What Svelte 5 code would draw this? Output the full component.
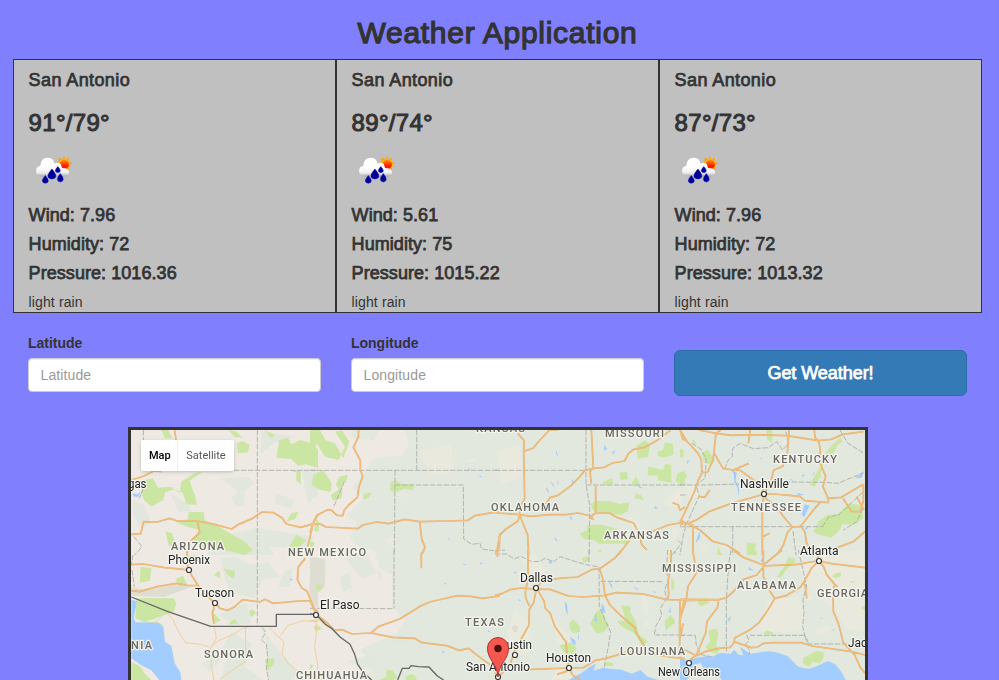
<script>
  const days = [
    { temp: '91°/79°', wind: '7.96', humidity: '72', pressure: '1016.36' },
    { temp: '89°/74°', wind: '5.61', humidity: '75', pressure: '1015.22' },
    { temp: '87°/73°', wind: '7.96', humidity: '72', pressure: '1013.32' }
  ];

  // Each map tile is drawn at three units per pixel from its own origin.
  const tiles = [
    {
      x: 128, y: 425,
      forest: 'M100 15H120L134 40H110Z M326 55L345 48 365 60 360 82 330 85Z M302 15L322 18 344 38 320 36Z M454 45L480 38 490 58 515 45 555 55 570 75V130L535 118 510 122 490 102 445 98Z M410 15L440 30 429 40Z M505 137H518V178L505 168Z M50 165L75 160 90 188 130 185 155 205 160 170 200 145 223 140 185 167 200 210 207 240 175 238 165 205 140 192 112 202 105 225 70 245 48 225 38 205Z M182 260L228 262 229 285 270 303 305 325 350 350 375 376 350 390 300 378 230 370 190 345 215 315 178 305 145 292 180 282Z M112 318L132 325 145 360 123 364Z M490 264L512 260 502 282 475 290Z M505 330L535 345 515 366 480 370Z',
      pale: 'M280 160L360 155 380 176 350 195 348 240 328 247 310 218 330 200Z M445 205L500 225 490 250 440 235Z M400 18L500 35 440 55 398 88Z M520 133H570V210L540 235Z M240 340L390 310 560 335 535 370 420 365 440 390H240Z M15 230L48 238 70 295 40 310 15 270Z M128 205L180 238 190 258 150 260Z',
      water: 'M12 205L28 208 40 200 30 216 17 214Z M495 134L507 138 500 141Z',
      dash: 'M388 15V390 M318 136H570 M46 15V45 M46 190L34 220 M18 335L42 365 20 390',
      road: 'M140 15L144 45 M78 137L48 153 10 165 M10 328L38 326 47 290 88 291 125 280 148 288 208 288 260 298 311 312 332 298 374 280 402 261 437 263 462 278 475 297 518 307 550 298 570 297 M208 288L215 323 190 346 176 390 M570 270L557 290 539 365 M100 140L80 137'
    },
    {
      x: 310, y: 425,
      forest: 'M0 15L30 15 46 45 75 55 100 100 118 50 95 15 75 20 105 65 85 105 45 95 20 55 0 120Z M10 150L40 135 65 175 62 200 30 195 5 180Z M88 155L113 149 108 170 98 175 95 220 70 227 62 211 88 192 77 180Z M160 208L185 202 177 218 160 224Z M242 170L260 167 273 176 311 179V196L285 191 257 201 240 197Z M16 276L28 293 25 320 10 317 18 298Z M0 350L14 350 10 370 0 372Z',
      pale: 'M330 75L425 60 430 140 360 150Z M270 205L300 207 290 218 255 210Z M227 345L250 330 250 367 230 357Z M470 103L500 101 490 114 469 110Z',
      water: 'M475 132L485 130 474 138Z M415 338L420 342 414 344Z M508 150L518 155 510 156Z',
      dash: 'M0 136H570 M320 15V136 M255 136L253 390 M255 180H460L461 342 485 358 510 355 515 372 552 377 M103 170L70 248',
      road: 'M146 15L145 36 130 67 151 106 151 133 158 155 147 185 142 217 116 240 103 255 98 272 81 271 65 256 53 254 20 271 12 290 0 322 M0 297L31 297 48 306 143 311 159 300 200 291 236 296 284 283 329 290 411 288 474 286 494 272 552 262 570 261 M329 290L335 341 345 367 334 390 M570 325L563 365 560 390'
    },
    {
      x: 495, y: 425,
      forest: 'M424 62L451 45 465 60 459 95 429 102Z M487 80L504 75 510 52 534 56 536 89 504 98 490 93Z M373 143L395 140 400 162 377 165Z M411 173L422 155 434 173 419 187Z M459 125L504 134 511 117 528 119 530 173 489 166 488 151 458 152Z M547 145L570 138V176L542 171Z M322 172L350 160 357 177 331 179Z M302 228H340L376 236 403 232 399 257 378 270 298 261 285 238Z M422 206L438 210 447 225 420 219Z M278 300L318 299 370 312 331 328 335 341 402 345 400 356 312 356 295 345 268 343 253 326 275 316Z',
      pale: 'M5 80L70 60 84 125 72 160 20 180Z M505 232L548 190 570 200 550 245 515 245Z M530 300L555 320 535 350Z M400 270L440 300 425 345Z',
      water: 'M166 168L175 178 177 190Z M151 189L159 192 162 207Z M187 165L191 177 187 179Z M183 76L190 93 183 88Z M327 60L336 72 328 78Z M429 178L442 190 432 188Z M233 161L236 177 230 170Z M177 335L190 348 181 346Z M226 270L233 285 225 282Z M480 243L489 250 478 252Z M350 82L361 75 356 89Z',
      dash: 'M0 136H272 M273 15L273 180 284 240 283 390 M273 180H570 M549 346L558 355 548 370 530 390 M0 376H30',
      road: 'M64 20L88 48 86 79 89 220 75 248 74 270 M86 79L115 69 132 48 164 15 189 15 M0 263L74 269 108 274 165 269 213 269 248 264 289 273 302 264 343 264 368 278 416 294 424 310 433 325 440 359 456 375 M74 270L69 288 33 312 14 330 13 365 5 390 M74 270L98 330 101 390 M289 15L295 128 M152 238L165 218 189 211 229 181 253 156 270 136 296 130 327 127 353 114 389 108 400 86 416 73 445 68 482 49 526 16 M295 128L285 140 289 176 M302 184L302 264 M289 273L294 283 285 279 M570 246L555 256 550 240 533 233 M556 15L563 43 570 45 M570 291L520 300 460 324 406 342 370 390'
    },
    {
      x: 680, y: 425,
      forest: 'M472 44L483 38 488 50 472 60 457 92 430 100 440 78Z M397 165L418 130 430 110 421 155 403 185 390 180Z M415 290L440 270 474 267 507 235 540 240 551 278 522 300 489 296 475 320 454 338 419 329 400 322Z M258 15H277V53L262 45Z M66 85L82 73 105 105 94 120 70 110Z M0 140V180L15 178 13 165 23 150Z M0 70L11 75 10 98 0 97Z M200 352L228 357 222 390H200Z M114 365L127 390H112Z M35 45L45 47 49 60 38 54Z',
      pale: 'M300 40L327 48 329 56 309 68Z M20 180L45 186 58 216 30 223 18 205Z M60 350L80 370 70 382Z M403 355L430 348 422 374Z',
      water: 'M152 134L170 143 167 166 178 192 175 216 173 191 163 170 161 146Z M374 238L388 243 373 275 365 270Z M352 204L373 209 355 213Z M240 98L247 99 242 103Z M58 318L61 338 47 354Z M404 142L398 156 400 143Z M373 310L386 304 379 315Z M371 148L374 154 363 154Z M20 108L29 106 22 118Z M332 162L343 168 330 165Z M525 160L552 138 545 158Z',
      dash: 'M0 180H58L75 180 178 177 M230 170L435 172 474 175 550 143 M0 305H430 M158 305V390 M428 305L444 278 480 267 508 240 550 200 M35 55L62 72 79 103 75 160 47 180 58 212 32 270 18 300 10 330 0 390 M318 20L326 55 308 75 290 50 265 68 220 71 180 55 158 70 157 95 145 105 135 128 M0 210H22 M339 318L348 390 M480 15L504 55 552 85 M550 250L530 290 490 315',
      road: 'M0 15L20 48 55 86 64 105 66 143 55 165 45 196 20 250 0 293 M66 143L83 141 99 105 108 25 123 15 M56 15L108 25 155 31 211 29 320 32 415 47 453 43 489 28 550 20 M211 15L205 56 M101 82L129 130 160 135 207 115 M160 135L181 136 245 183 253 207 M327 15L322 89 308 124 281 136 272 170 253 207 M403 15L405 37 416 50 421 75 419 111 437 154 429 185 445 221 M253 207L280 207 329 211 360 215 375 227 446 233 M253 207L152 236 89 259 49 285 24 296 0 285 M253 207L259 223 289 243 309 273 337 306 362 304 401 254 423 230 M251 215L247 245V390 M24 296L39 300 39 390 M24 296L60 315 98 349 140 360 179 385 M247 336L269 325 M337 306L323 321 309 363 290 390 M362 304L375 321 379 352 401 390 M446 233L444 220 484 217 550 178 M489 220L514 259 541 260 550 228 550 180 M530 215L552 255 M555 320L520 350 460 372 425 390 M55 214L75 217 89 195 M0 300L15 292 16 305'
    },
    {
      x: 128, y: 550,
      forest: 'M38 50L70 55 66 92 35 98Z M142 87L165 77 178 105 154 108Z M26 145H137L145 160 137 185 50 217 22 205Z M55 217L85 215 108 225 62 222Z M180 18L207 15 211 33 180 33Z M257 75L275 61 277 86Z M285 55L321 63 318 87 300 75Z M248 181L278 211 261 219Z M362 183L374 177 385 190 369 202Z M307 215L321 205 330 222 303 224Z M412 328L438 324 438 342 415 362Z M10 335L38 350 48 368 70 390H10Z',
      pale: 'M278 25L320 20 370 45 420 35 455 80 400 90 380 145 310 130 292 90Z M270 193L356 158 370 220 324 225Z M310 245L373 282 350 350 401 390H280L297 310 245 365 220 340 275 315Z M395 230L510 370 490 390H420L415 270Z M451 110L470 65 492 55 486 110Z',
      desert: 'M10 112L60 121 140 105 188 112 108 141 10 137Z M545 85H570V175L555 160 545 130Z',
      water: 'M10 149L27 154 17 205 23 217 90 218 106 230 111 275 130 288 140 340 157 367 160 390H94L70 361 40 346 10 325Z M487 83L495 90 488 92Z',
      dash: 'M388 15V227 M403 233L413 247 400 270 415 282 419 326 415 355 422 390 M12 60L19 110 M15 15L10 45',
      border: 'M10 141L118 184 248 229H445V193H566',
      road: 'M176 0L179 50 190 75 210 106 235 134 260 160 257 178 253 190 258 222 M10 44L46 42 110 53 166 58 182 59 M10 122L35 125 88 110 146 100 177 106 211 107 M262 158L276 175 299 181 320 170 344 149 395 156 411 148 434 160 512 153 546 152 M532 25L511 50 508 89 522 115 537 123 560 178 570 185',
      minor: 'M259 229L265 265 248 294 250 350 258 390 M245 292L220 283 172 278 150 242 135 208 115 185 95 205 78 220 M248 292L270 273 316 253 343 235 366 230 M352 230L353 290 352 334 320 356 276 388 M425 233L440 250 468 275 462 310 480 340 M455 260L481 226 525 212 570 215 M480 340L520 370 570 390'
    },
    {
      x: 310, y: 550,
      forest: 'M10 231L24 226 36 237 18 243Z M228 361L247 360 263 385 250 390H206L230 380Z M287 379L307 371 321 385 318 390H287Z M18 106L34 103 39 116 18 122Z M0 343L10 346 5 356 0 353Z',
      pale: 'M100 15L166 0 200 70 160 85 138 70Z M205 60L215 68 212 92 204 86Z M230 260L287 255 320 275 260 287Z M90 80L120 65 125 115 99 125Z M115 335L189 310 210 350 178 358Z M365 0L398 2 386 20Z',
      desert: 'M0 20L46 28 45 110 18 135 0 130Z',
      water: 'M456 41L470 42 463 46Z M402 97L409 101 404 104Z M512 36L517 40 510 45Z M536 240L540 245 532 247Z M395 302L406 306 398 310Z',
      dash: 'M252 0V176 M0 175L252 176',
      border: 'M0 192L18 193 45 222 66 236 91 262 120 283 134 313 143 343 160 368 185 390 M263 390L277 355 297 355 303 347 325 350 357 351 382 378 401 390',
      road: 'M343 0L334 11 334 55 M563 20L557 0 M0 152L18 192 55 222 74 241 96 239 126 252 183 249 249 262 314 265 336 278 410 287 448 301 476 295 494 310 540 344 565 380 M183 249L205 230 269 207 331 169 359 156 398 147 443 137 482 139 517 145 570 138',
      minor: 'M18 203L19 250 14 290 23 343 20 390 M0 212L30 210 55 234 M0 355L13 378 37 390'
    },
    {
      x: 495, y: 550,
      forest: 'M378 165L407 170 405 186 421 211 432 255 461 275 439 285 421 251 383 232 366 214 393 212Z M529 80L539 100 535 123 528 110Z M509 214L526 195 537 207 541 218 512 241Z M222 219L235 209 257 231 254 247 234 249 225 239Z M285 220L304 185 324 174 330 204 343 228 327 245 305 251Z M193 286L232 277 246 296 235 313 204 307Z M260 24L280 18 282 33 265 38Z M305 0H319L316 7Z M325 337L351 337 357 348 328 348Z',
      pale: 'M70 20L120 10 155 70 125 80Z M439 133L463 152 457 189 438 179Z M460 208L440 224 449 239 462 223Z M152 175L240 280 230 390H170L200 310Z M60 180L20 305 50 325 97 315 110 220Z',
      desert: 'M49 235L60 224 71 230 63 249 54 244Z',
      water: 'M220 390L261 368 284 350 303 341 295 362 322 354 380 359 410 371 437 360 455 379 489 390Z M297 214L302 190 306 214Z M209 152L217 166 218 198 211 177Z M159 37L174 30 168 42Z M319 160L327 170 332 188 321 185Z M224 260L240 271 243 286 232 279Z M249 250L253 263 250 272Z M260 290L258 305 256 305Z M70 146L79 154 71 152Z M416 109L431 119 422 118Z M340 94L352 105 350 116Z M473 120L484 128 479 129Z M525 169L528 187 521 188Z M542 0L543 13 535 9Z M56 65L64 65 60 72Z',
      dash: 'M0 12L35 12 57 27 77 19 110 35 135 34 150 25 176 35 195 20 239 34 275 44 312 51 313 170 330 210 347 246 340 290 326 360 M282 0V40 M317 94L502 95 M518 0L514 70 522 83 509 120 514 146 496 176 500 196 482 230 478 255H570',
      road: 'M99 0L99 86 91 125 M0 136L20 131 45 119 81 114 124 118 165 118 220 138 265 141 330 136 364 128 445 132 516 149 570 150 M124 113L141 93 193 85 248 81 290 59 314 56 361 23 380 0 M314 56L324 89 330 136 345 165 380 199 421 234 421 245 448 287 453 300 M124 118L116 158 103 178 102 225 60 300 46 341 9 383 M91 125L92 144 103 168 M127 118L148 155 150 174 165 189 180 230 213 276 216 320 222 354 M0 352L44 362 110 358 222 354 265 353 302 331 333 325 400 305 450 309 524 321 570 326 M222 354L213 365 186 373 M222 354L232 374 254 390 M528 0V40L519 95 521 130 518 151 M568 150L554 210 554 320 M500 311L520 320'
    },
    {
      x: 680, y: 550,
      forest: 'M325 22L345 26 344 42 322 55 303 83 291 80 311 51Z M53 148L82 144 88 159 64 169 54 163Z M85 240L110 236 115 253 108 287 123 294 110 311 88 305 76 291 91 275Z M249 251L259 241 281 248 275 255Z M369 324L410 302 430 307 431 324 418 340 397 335 387 352 368 340Z M466 70L457 79 467 85 484 79 482 67Z M210 15L230 0V17Z M545 170L555 167V180L545 178Z M507 94L530 94 516 99Z',
      pale: 'M408 15L551 0V245L500 235 456 170 380 110 355 50Z M260 150L360 140 375 235 310 248 235 245Z M404 244L445 225 455 242 413 255Z M380 133L402 141 385 157Z',
      water: 'M10 326L22 333 53 322 63 322 82 317 93 322 119 309 152 311 163 300 177 315 190 316 180 290 210 311 265 304 286 306 323 318 355 350 385 357 407 350 443 333 466 343 484 365 497 390H125L110 364 75 367 63 339 37 345 40 368 20 390H0V326Z M142 208L154 199 147 216Z M250 20L252 40 241 32Z M205 50L222 62 207 60Z M421 202L428 205 425 207Z M457 237L462 239 460 244Z M382 263L386 280 380 275Z',
      dash: 'M153 0L146 40 139 150V305 M0 256H46L49 285 63 314 95 320 M210 256H374L384 282H507 M355 0L380 108 369 148 372 190 368 230 378 270 M200 254L207 271 195 285 210 301 207 314',
      road: 'M38 0L50 67 24 109 19 148 5 192 0 210 M19 152L116 149 140 143 162 123 191 88 230 75 250 50 M0 148L116 149 112 173 81 214 77 249 49 315 30 330 M250 0V80L268 121 284 145 M162 3L190 22 250 45 306 0 M250 48L284 46 346 44 410 33 M416 33L394 55 374 92 361 112 320 136 284 146 265 178 237 218 208 241 164 264 162 278 151 292 117 295 75 305 49 317 22 303 0 296 M162 275L188 284 214 293 233 291 251 280 284 278 312 278 364 278 396 288 515 305 555 315 M416 33L455 41 555 53 M416 33L431 50 440 74 464 103 459 130 460 185 475 220 490 278 524 315 540 350 555 370 M464 103L473 110 M370 96L376 108 380 145 M410 0L416 33 M0 153V245 M0 265L10 220'
    }
  ];

  const states = [
    ['KANSAS', 476, 432, 49], ['MISSOURI', 605, 437, 59], ['KENTUCKY', 773, 463, 64],
    ['TENNESSEE', 731, 511, 70], ['OKLAHOMA', 491, 511, 68], ['ARKANSAS', 604, 539, 65],
    ['ARIZONA', 171, 550, 53], ['NEW MEXICO', 288, 556, 78], ['MISSISSIPPI', 662, 572, 74],
    ['ALABAMA', 737, 589, 59], ['GEORGIA', 817, 597, 51], ['TEXAS', 465, 626, 39],
    ['LOUISIANA', 620, 655, 65], ['SONORA', 204, 658, 49], ['CHIHUAHUA', 296, 679, 71],
    ['NIA', 131, 649, 21]
  ];
  const cities = [
    ['gas', 128, 488, 18.5], ['Nashville', 740, 488, 49, 764, 494], ['Phoenix', 168, 564, 42, 189, 570],
    ['Tucson', 195, 597, 39, 215, 603], ['El Paso', 320, 609, 39.5, 316, 615],
    ['Dallas', 520, 582, 33, 536, 588], ['Atlanta', 800, 555, 38.5, 819, 561],
    ['Austin', 499, 649, 33, 515, 655], ['Houston', 546, 662, 45, 569, 668],
    ['San Antonio', 466, 671, 64, 498, 677], ['New Orleans', 658, 675.5, 62, 689, 663],
    ['Jacksonville', 848, 647, 65]
  ];
  const place = (t) => `translate(${t.x} ${t.y}) scale(.33333)`;
</script>

<svelte:head><title>Weather Application</title></svelte:head>

<main>
  <h1>Weather Application</h1>
  <section class="days">
    {#each days as day}
      <article>
        <h4 class="city">San Antonio</h4>
        <h3>{day.temp}</h3>
        <svg class="weather" width="50" height="50" viewBox="0 0 50 50" aria-label="light rain">
          <defs>
            <linearGradient id="cloud" x2="0" y2="1"><stop offset=".5" stop-color="#fff" /><stop offset=".8" stop-color="#eee" /><stop offset="1" stop-color="#aaa" /></linearGradient>
            <linearGradient id="sun" x2="0" y2="1"><stop stop-color="#ff9800" /><stop offset=".65" stop-color="#ff1a00" /></linearGradient>
          </defs>
          <path fill="#ff9f0a" d="M35 11l1.6 3.2 3.4-1.6-.8 3.5 4.300 2.500-4.300 1.700 1 4-3.700-.9L35 26l-2-3.500-4 .8.900-3.700-2-1.500 2.100-1.800-.900-3.700 4.400 1.600z" />
          <circle cx="35.300" cy="19.500" r="5.200" fill="url(#sun)" stroke="#ffb31a" />
          <path fill="url(#cloud)" d="M13 31.500q-6-.5-6-5.700 0-4 4.300-5 .5-8 7.700-8 5.500 0 6.600 6 3.400-2 6 0l1.500 4.200q7 .1 7 4.500 0 4-5 4z" />
          <g fill="#000094" stroke="#0808bd" stroke-width=".5">
            <path d="M16.300 30.500q6 7 0 7.800-6-.8 0-7.800z" />
            <path d="M22.900 24q8 9 0 10-8-1 0-10z" />
            <path d="M31.300 28.500q6 7.500 0 8.500-6-1 0-8.500z" />
            <path d="M28.800 21.500q5 5.500 0 6.200-5-.7 0-6.200z" />
          </g>
        </svg>
        <h4>Wind: {day.wind}</h4>
        <h4>Humidity: {day.humidity}</h4>
        <h4>Pressure: {day.pressure}</h4>
        <p>light rain</p>
      </article>
    {/each}
  </section>

  <form onsubmit={(e) => e.preventDefault()}>
    <div class="field"><label for="lat">Latitude</label><input id="lat" placeholder="Latitude" /></div>
    <div class="field"><label for="lng">Longitude</label><input id="lng" placeholder="Longitude" /></div>
    <div class="field action"><button>Get Weather!</button></div>
  </form>

  <section class="map">
    <svg width="734" height="250" viewBox="131 430 734 250" aria-label="Map">
      <rect x="131" y="430" width="734" height="250" fill="#e2e8dd" />
      <path fill="#eee9e2" d="M131 430H351L353 438 374 440 379 430H405L409 445 401 456 374 458 365 471 352 488 364 496 352 511 345 515 357 522 350 537 360 548 375 550 379 568 392 575 392 608 405 620 398 632 360 650 375 665 365 680H131Z" />
      <g fill="#dfe7dc" opacity=".85">{#each tiles.slice(0, 1).concat(tiles.slice(4, 6)) as t}<path transform={place(t)} d={t.pale} />{/each}</g>
      <g fill="#ebeadd" opacity=".75">{#each tiles.slice(1, 4).concat(tiles.slice(6)) as t}<path transform={place(t)} d={t.pale} />{/each}</g>
      <g fill="#deddd1">{#each tiles as t}{#if t.desert}<path transform={place(t)} d={t.desert} />{/if}{/each}</g>
      <g fill="#cbe6a3">{#each tiles as t}<path transform={place(t)} d={t.forest} />{/each}</g>
      <g fill="#a3ccff">{#each tiles as t}<path transform={place(t)} d={t.water} />{/each}</g>
      <g class="dash">{#each tiles as t}<path transform={place(t)} d={t.dash} />{/each}</g>
      <g class="minor">{#each tiles as t}{#if t.minor}<path transform={place(t)} d={t.minor} />{/if}{/each}</g>
      <g class="road">{#each tiles as t}<path transform={place(t)} d={t.road} />{/each}</g>
      <g class="road inner">{#each tiles as t}<path transform={place(t)} d={t.road} />{/each}</g>
      <g class="border">{#each tiles as t}{#if t.border}<path transform={place(t)} d={t.border} />{/if}{/each}</g>
      <g class="states">{#each states as [name, x, y, w]}<text {x} {y} textLength={w}>{name}</text>{/each}</g>
      <g class="cities">
        {#each cities as [name, x, y, w, cx, cy]}
          {#if cx}<circle {cx} {cy} r="2.5" />{/if}
          <text {x} {y} textLength={w} lengthAdjust="spacingAndGlyphs">{name}</text>
        {/each}
      </g>
      <path d="M498 677C497 663 487.500 660 487.500 648a10.500 10.500 0 0 1 21 0C508.500 660 499 663 498 677Z" fill="#f4584e" stroke="#ae3430" />
      <circle cx="498" cy="648.500" r="3.700" fill="#4b100d" />
    </svg>
    <div class="switch"><button class="on">Map</button><button>Satellite</button></div>
  </section>
</main>

<style>
  :global(body) { margin: 0; background: #8080ff; overflow: hidden; }
  main { height: 680px; overflow: hidden; font: 14px/20px "Liberation Sans", Arial, sans-serif; color: #333; box-sizing: border-box; padding: 16px 17px 0 13px; }
  h1, h3, h4, p { margin: 0; }
  h1, h3, h4 { font-weight: 400; -webkit-text-stroke: .75px #333; }
  h1 { font-size: 30px; line-height: 33px; letter-spacing: .72px; text-align: center; margin-bottom: 10px; -webkit-text-stroke-width: 1.25px; }
  h4 { font-size: 18px; line-height: 20px; letter-spacing: .06px; margin-bottom: 9px; }
  .city { letter-spacing: .4px; }
  h3 { font-size: 24px; line-height: 26px; letter-spacing: .3px; margin: 20px 0 9px; -webkit-text-stroke-width: 1px; }
  .days { display: flex; }
  article { width: 323px; height: 254px; box-sizing: border-box; border: 1px solid #333; background: silver; padding: 10px 14px 0 14.6px; }
  .weather { display: block; margin: 0 0 10px; }
  p { margin-top: 9px; letter-spacing: .12px; }
  form { display: flex; height: 114px; box-sizing: border-box; padding-top: 20px; }
  .field { width: 323px; box-sizing: border-box; padding: 0 15px; }
  label { display: block; font-weight: 700; margin-bottom: 5px; letter-spacing: -.02px; }
  input { display: block; width: 293px; height: 34px; box-sizing: border-box; border: 1px solid #ccc; border-radius: 4px; padding: 6px 11.5px; font: inherit; letter-spacing: .12px; box-shadow: inset 0 1px 1px #00000013; background: white; }
  input::placeholder { color: #999; opacity: 1; }
  .action { padding-top: 17px; }
  .action button { width: 293px; height: 46px; border: 1px solid #2e6da4; border-radius: 6px; background: #337ab7; color: white; font: 18px/24px "Liberation Sans", Arial, sans-serif; letter-spacing: -.05px; -webkit-text-stroke: .75px white; }
  .map { position: relative; margin-left: 115px; width: 734px; height: 260px; border: 3px solid #333; background: #e2e8dd; }
  .map svg { display: block; }
  .switch { position: absolute; left: 10px; top: 10px; display: flex; height: 31px; border-radius: 2px; background: white; box-shadow: 0 1px 4px -1px #0000004d; }
  .switch button { border: 0; background: none; padding: 0 8px; font: 11px Roboto, sans-serif; color: #565656; width: 56px; white-space: nowrap; }
  .switch .on { color: black; font-weight: 500; width: 37px; border-right: 1px solid #eee; }
  .dash, .minor, .road, .border { fill: none; stroke-linejoin: round; }
  .dash { stroke: #aeb0ad; stroke-width: 2.8; stroke-dasharray: 16 5; }
  .minor { stroke: #eed09d; stroke-width: 3; }
  .road { stroke: #e6ae68; stroke-width: 5.2; }
  .inner { stroke: #f6cb94; stroke-width: 1.8; }
  .border { stroke: #666; stroke-width: 4; }
  text { font-family: Roboto, sans-serif; paint-order: stroke; stroke: #f3f4ee; stroke-width: 2.5px; stroke-linejoin: round; }
  .states { font-size: 11px; font-weight: 500; fill: #6a6761; }
  .cities { font-size: 12px; fill: #222; }
  circle { stroke-width: 1.2; }
  .cities circle { fill: white; stroke: #333; }
</style>
